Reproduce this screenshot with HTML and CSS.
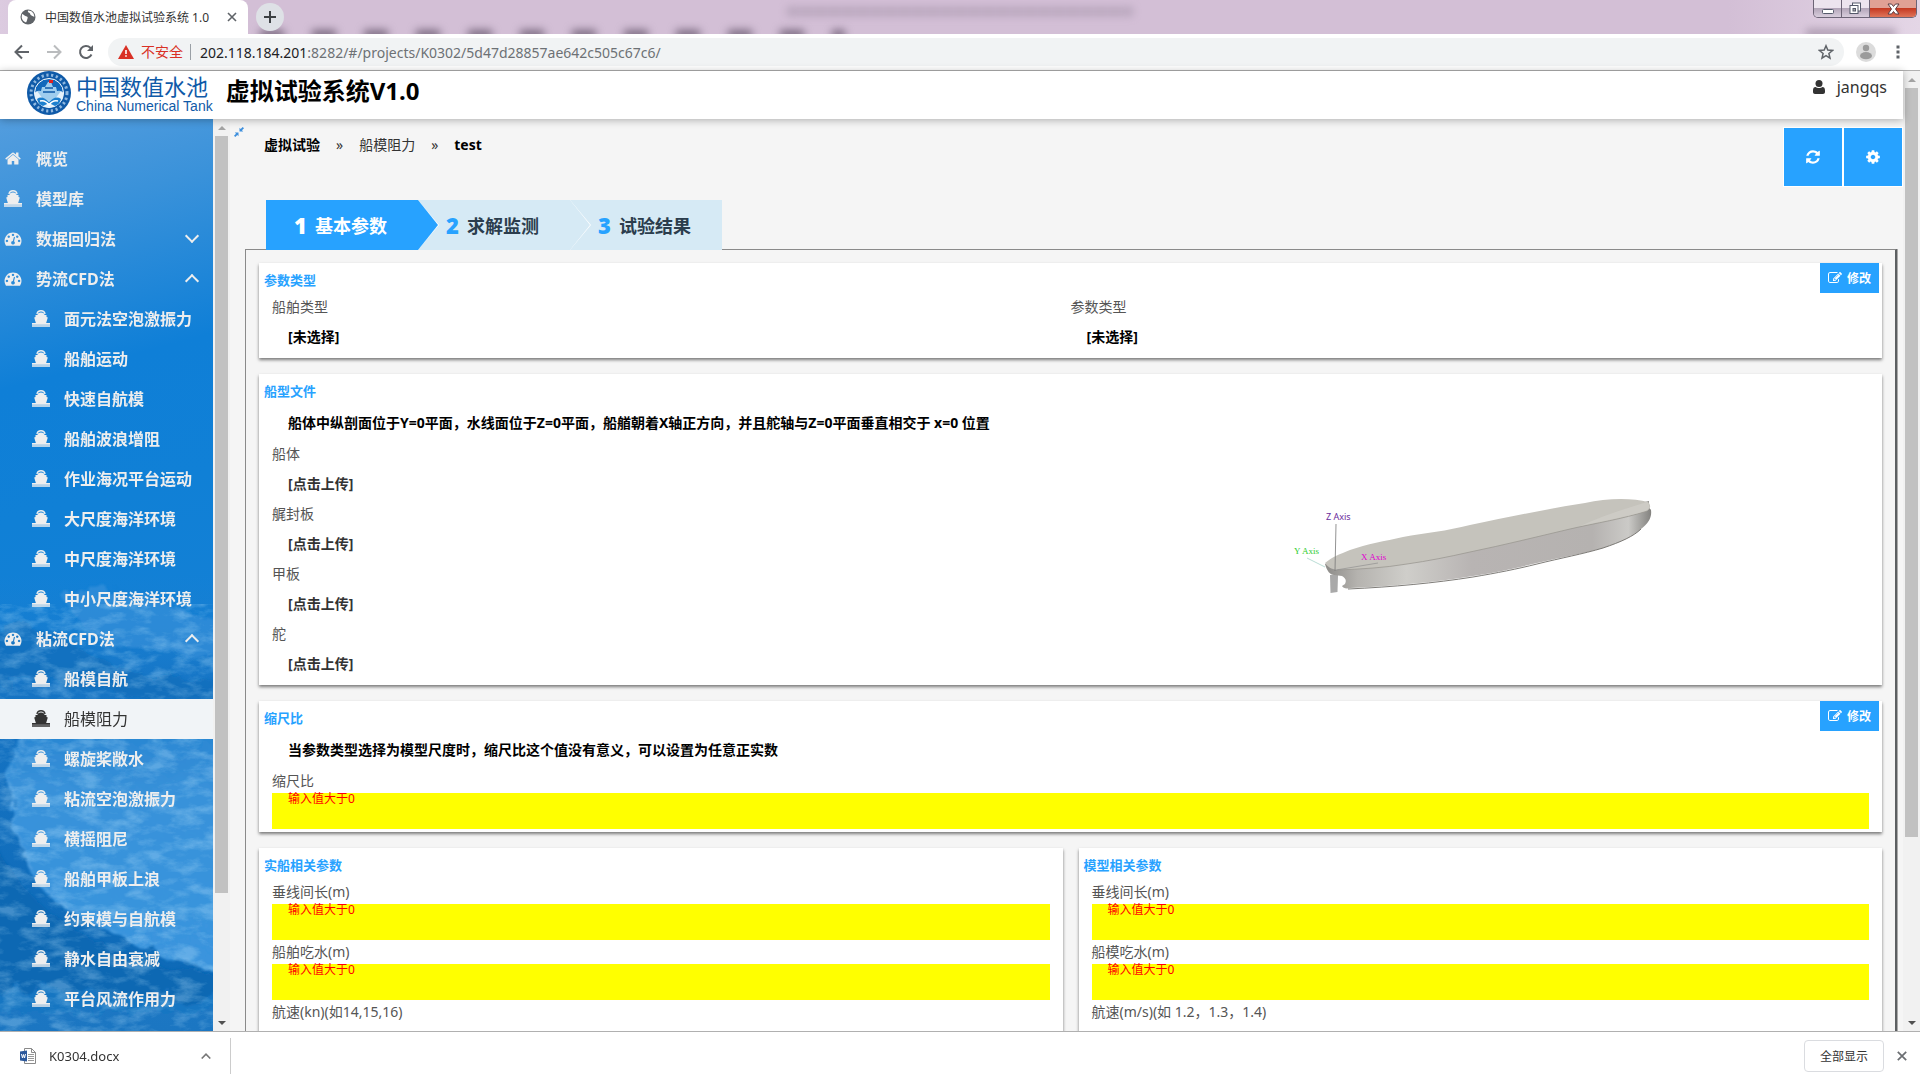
FILE: index.html
```html
<!DOCTYPE html>
<html lang="zh-CN">
<head>
    <meta charset="UTF-8">
    <meta name="viewport" content="width=device-width, initial-scale=1.0">
    <title>中国数值水池虚拟试验系统 1.0</title>
    <link rel="stylesheet" href="styles.css">
</head>
<body>
    <svg class="sprite" aria-hidden="true">
        <symbol id="i-home" viewBox="0 0 1792 1792"><path d="M1472 992v480q0 26-19 45t-45 19h-384v-384h-256v384h-384q-26 0-45-19t-19-45v-480q0-1 .5-3t.5-3l575-474 575 474q1 2 1 6zm223-69l-62 74q-8 9-21 11h-3q-13 0-21-7l-692-577-692 577q-12 8-24 7-13-2-21-11l-62-74q-8-10-7-23.5t11-21.5l719-599q32-26 76-26t76 26l244 204v-195q0-14 9-23t23-9h192q14 0 23 9t9 23v408l219 182q10 8 11 21.5t-7 23.5z"/></symbol>
        <symbol id="i-gauge" viewBox="0 0 1792 1792"><path d="M384 1152q0-53-37.5-90.5t-90.5-37.5-90.5 37.5-37.5 90.5 37.5 90.5 90.5 37.5 90.5-37.5 37.5-90.5zm192-448q0-53-37.5-90.5t-90.5-37.5-90.5 37.5-37.5 90.5 37.5 90.5 90.5 37.5 90.5-37.5 37.5-90.5zm428 481l101-382q6-26-7.5-48.5t-38.5-29.5-48 6.5-30 39.5l-101 382q-60 5-107 43.5t-63 98.5q-20 77 20 146t117 89 146-20 89-117q16-60-6-117t-72-91zm660-33q0-53-37.5-90.5t-90.5-37.5-90.5 37.5-37.5 90.5 37.5 90.5 90.5 37.5 90.5-37.5 37.5-90.5zm-640-640q0-53-37.5-90.5t-90.5-37.5-90.5 37.5-37.5 90.5 37.5 90.5 90.5 37.5 90.5-37.5 37.5-90.5zm448 192q0-53-37.5-90.5t-90.5-37.5-90.5 37.5-37.5 90.5 37.5 90.5 90.5 37.5 90.5-37.5 37.5-90.5zm320 448q0 261-141 483-19 29-54 29h-1402q-35 0-54-29-141-221-141-483 0-182 71-348t191-286 286-191 348-71 348 71 286 191 191 286 71 348z"/></symbol>
        <symbol id="i-ship" viewBox="0 0 18 17"><path d="M5 4C5.300 1.700 6.800 .7 9 .7s3.700 1 4 3.300" fill="none" stroke="currentColor" stroke-width="1.400"/><path d="M5.500 5c0-1.500 1-2.600 3.500-2.600s3.500 1.100 3.500 2.600h2v2l1.300.6-1.800 5.900H4L2.200 7.600 3.500 7V5z"/><path d="M0 13h18v4H0z" opacity=".75"/><path d="M0 13h18v1.200H0z"/></symbol>
        <symbol id="i-cog" viewBox="0 0 1792 1792"><path d="M1152 896q0-106-75-181t-181-75-181 75-75 181 75 181 181 75 181-75 75-181zm512-109v222q0 12-8 23t-20 13l-185 28q-19 54-39 91 35 50 107 138 10 12 10 25t-9 23q-27 37-99 108t-94 71q-12 0-26-9l-138-108q-44 23-91 38-16 136-29 186-7 28-36 28h-222q-14 0-24.5-8.5t-11.5-21.5l-28-184q-49-16-90-37l-141 107q-10 9-25 9-14 0-25-11-126-114-165-168-7-10-7-23 0-12 8-23 15-21 51-66.5t54-70.5q-27-50-41-99l-183-27q-13-2-21-12.5t-8-23.5v-222q0-12 8-23t19-13l186-28q14-46 39-92-40-57-107-138-10-12-10-24 0-10 9-23 26-36 98.5-107.5t94.500-71.5q13 0 26 10l138 107q44-23 91-38 16-136 29-186 7-28 36-28h222q14 0 24.5 8.5t11.5 21.5l28 184q49 16 90 37l142-107q9-9 24-9 13 0 25 10 129 119 165 170 7 8 7 22 0 12-8 23-15 21-51 66.5t-54 70.5q26 50 41 98l183 28q13 2 21 12.5t8 23.5z"/></symbol>
        <symbol id="i-refresh" viewBox="0 0 1792 1792"><path d="M1639 1056q0 5-1 7-64 268-268 434.5t-478 166.5q-146 0-282.5-55t-243.5-157l-129 129q-19 19-45 19t-45-19-19-45v-448q0-26 19-45t45-19h448q26 0 45 19t19 45-19 45l-137 137q71 66 161 102t187 36q134 0 250-65t186-179q11-17 53-117 8-23 30-23h192q13 0 22.5 9.5t9.5 22.5zm25-800v448q0 26-19 45t-45 19h-448q-26 0-45-19t-19-45 19-45l138-138q-148-137-349-137-134 0-250 65t-186 179q-11 17-53 117-8 23-30 23h-199q-13 0-22.5-9.5t-9.5-22.5v-7q65-268 270-434.5t480-166.5q146 0 284 55.5t245 156.5l130-129q19-19 45-19t45 19 19 45z"/></symbol>
        <symbol id="i-edit" viewBox="0 0 1792 1792"><path d="M888 1184l116-116-152-152-116 116v56h96v96h56zm440-720q-16-16-33 1l-350 350q-17 17-1 33t33-1l350-350q17-17 1-33zm80 594v190q0 119-84.5 203.5t-203.5 84.5h-832q-119 0-203.5-84.5t-84.5-203.5v-832q0-119 84.5-203.5t203.5-84.5h832q63 0 117 25 15 7 18 23 3 17-9 29l-49 49q-14 14-32 8-23-6-45-6h-832q-66 0-113 47t-47 113v832q0 66 47 113t113 47h832q66 0 113-47t47-113v-126q0-13 9-22l64-64q15-15 35-7t20 29zm-96-738l288 288-672 672h-288v-288zm444 132l-92 92-288-288 92-92q28-28 68-28t68 28l152 152q28 28 28 68t-28 68z"/></symbol>
    </svg>

    <div class="tab-strip">
        <div class="glass" aria-hidden="true">
            <i class="ghost ghost-title"></i>
            <i class="ghost ghost-menu"></i>
            <i class="ghost ghost-share"></i>
        </div>
        <div class="tab">
            <svg width="16" height="16" viewBox="0 0 16 16"><circle cx="8" cy="8" r="7.500" fill="#5f6368"/><path d="M2 5c2 .5 2.500 2 4 2.200s2 1 1.500 2.300S7 12 6 13.500C4 13 2 11 1.700 8.500zM8 1.500c-.5 1.500.5 2 1.500 2.500s.5 2 2 2.500 2 1.500 2.800 1.200C14.300 4.500 12 1.500 8 1.500z" fill="#fff"/></svg>
            <span class="tab-title">中国数值水池虚拟试验系统 1.0</span>
            <button class="plain" aria-label="关闭标签页"><svg width="10" height="10" viewBox="0 0 10 10"><path d="M1 1l8 8M9 1l-8 8" stroke="#5f6368" stroke-width="1.600"/></svg></button>
        </div>
        <button class="new-tab" aria-label="新标签页"><svg width="12" height="12" viewBox="0 0 12 12"><path d="M6 0v12M0 6h12" stroke="#3c4043" stroke-width="2"/></svg></button>
        <div class="window-buttons">
            <button class="win" aria-label="最小化"><svg width="14" height="14" viewBox="0 0 14 14"><rect x="1.500" y="7.500" width="11" height="4" rx="1" fill="#fff" stroke="#555a6b"/></svg></button>
            <button class="win" aria-label="还原"><svg width="13" height="13" viewBox="0 0 13 13"><rect x="3.500" y="1" width="8" height="8" fill="#fff" stroke="#555a6b"/><rect x="1" y="3.500" width="8" height="8" fill="#fff" stroke="#555a6b"/><rect x="4" y="6.500" width="2.500" height="2.500" fill="#aaa" stroke="#555a6b"/></svg></button>
            <button class="win win-close" aria-label="关闭"><svg width="13" height="12" viewBox="0 0 13 12"><path d="M1 1h3.500l2 2.500 2-2.500H12L8.500 6l3.500 5H8.500l-2-2.500-2 2.500H1l3.500-5z" fill="#fff" stroke="#5b3f44"/></svg></button>
        </div>
    </div>

    <div class="toolbar">
        <div class="nav-buttons">
            <button class="plain" aria-label="后退"><svg width="16" height="16" viewBox="0 0 16 16"><path d="M15 8H2M8 1.500L1.500 8 8 14.500" fill="none" stroke="#5f6368" stroke-width="2"/></svg></button>
            <button class="plain" aria-label="前进"><svg width="16" height="16" viewBox="0 0 16 16"><path d="M1 8h13M8 1.500L14.500 8 8 14.500" fill="none" stroke="#babcbe" stroke-width="2"/></svg></button>
            <button class="plain" aria-label="刷新"><svg width="16" height="16" viewBox="0 0 16 16"><path d="M13.500 10.500A6 6 0 1 1 12.300 3.700L14 5.400" fill="none" stroke="#5f6368" stroke-width="2"/><path d="M15 1v6H9z" fill="#5f6368"/></svg></button>
        </div>
        <div class="omnibox">
            <svg width="16" height="14" viewBox="0 0 16 14"><path d="M8 0l8 14H0z" fill="#d93025"/><path d="M7.200 5h1.600v4H7.200zM7.200 10.200h1.600v1.600H7.200z" fill="#fff"/></svg>
            <span class="insecure">不安全</span>
            <span class="url">202.118.184.201<span>:8282/#/projects/K0302/5d47d28857ae642c505c67c6/</span></span>
            <button class="plain star" aria-label="收藏"><svg width="16" height="16" viewBox="0 0 16 16"><path d="M8 1.800l1.800 4.300 4.700.4-3.600 3 1.100 4.600L8 11.700l-4 2.400 1.100-4.600-3.600-3 4.700-.4z" fill="none" stroke="#5f6368" stroke-width="1.500"/></svg></button>
        </div>
        <button class="plain" aria-label="用户"><svg width="20" height="20" viewBox="0 0 20 20"><circle cx="10" cy="10" r="10" fill="#dcdcdc"/><circle cx="10" cy="6" r="3.200" fill="#9b9b9b"/><ellipse cx="10" cy="13.700" rx="6" ry="3.600" fill="#9b9b9b"/></svg></button>
        <button class="plain" aria-label="菜单"><svg width="4" height="14" viewBox="0 0 4 14"><path d="M.5 .5h3v3h-3zM.5 5.500h3v3h-3zM.5 10.500h3v3h-3z" fill="#5f6368"/></svg></button>
    </div>

    <div class="page">
        <div class="app">
            <header class="header">
                <a class="logo" href="#">
                    <svg width="44" height="44" viewBox="0 0 44 44">
                        <circle cx="22" cy="22" r="22" fill="#0f5aa8"/>
                        <circle cx="22" cy="22" r="18" fill="none" stroke="#8fb8e0" stroke-width="3" stroke-dasharray="2.200 2.600"/>
                        <circle cx="22" cy="22" r="14.500" fill="#1268bb" stroke="#fff"/>
                        <path d="M7.500 22c3-3 6-3 9 0l5.500 5 5.500-5c3-3 6-3 9 0a14.500 14.500 0 0 1-29 0z" fill="#e6f2fb"/>
                        <path d="M21 11h3l2 5h3l1 4h4l-6 8-6 2-6-2-6-8h4l1-4h3z" fill="#9fcdee"/>
                        <path d="M16 21h12M18 17h8" stroke="#0f5aa8" stroke-width="1.500"/>
                        <path d="M22 9h4v3h-4z" fill="#e02020"/>
                        <path d="M10 28c4-3 8-1 12 3 4-4 8-6 12-3-1 4-3 6-6 7l-6-3-6 3c-3-1-5-3-6-7z" fill="#1c7fce"/>
                        <path d="M13 30c4-1 7 1 9 4 2-3 5-5 9-4" fill="none" stroke="#fff" stroke-width="1.500"/>
                    </svg>
                    <span class="logo-text">
                        <span class="logo-cn">中国数值水池</span>
                        <span class="logo-en">China Numerical Tank</span>
                    </span>
                </a>
                <h1>虚拟试验系统V1.0</h1>
                <div class="user">
                    <svg width="12" height="14" viewBox="0 0 12 14"><circle cx="6" cy="3.500" r="3.500"/><path d="M0 10.500C0 8 1 7 2.600 7c1 .7 2 1 3.400 1s2.400-.3 3.400-1C11 7 12 8 12 10.500V12c0 1.200-.8 2-2 2H2c-1.200 0-2-.8-2-2z"/></svg>
                    <span>jangqs</span>
                </div>
            </header>

            <div class="body">
                <nav class="sidebar">
                    <svg class="wave" viewBox="0 0 213 460" preserveAspectRatio="none" aria-hidden="true">
                        <defs>
                            <filter id="foam" x="0" y="0" width="1" height="1"><feTurbulence type="fractalNoise" baseFrequency=".04 .09" numOctaves="5" seed="8"/><feColorMatrix values="0 0 0 0 .5  0 0 0 0 .78  0 0 0 0 .98  0 3 0 0 -1.300"/></filter>
                            <filter id="rough" x="-.1" y="-.1" width="1.200" height="1.200"><feTurbulence type="fractalNoise" baseFrequency=".05" numOctaves="4" seed="3"/><feDisplacementMap in="SourceGraphic" scale="28"/><feGaussianBlur stdDeviation="1"/></filter>
                            <linearGradient id="fade" x1="0" y1="0" x2="0" y2="1"><stop offset="0" stop-color="#1c80d2" stop-opacity="0"/><stop offset=".25" stop-color="#1674c4"/><stop offset="1" stop-color="#0c68b5"/></linearGradient>
                            <linearGradient id="crest" x1="0" y1="0" x2="0" y2="1"><stop offset="0" stop-color="#2583d0"/><stop offset=".3" stop-color="#3992da"/><stop offset="1" stop-color="#3a95de"/></linearGradient>
                        </defs>
                        <rect width="213" height="460" fill="url(#fade)"/>
                        <g filter="url(#rough)">
                            <path d="M22 160C70 130 150 150 240 140V406C150 385 80 350 45 320 10 280-2 210 22 160z" fill="url(#crest)"/>
                            <path d="M60 20c50-10 90 0 180 40v30c-60-10-110-20-150-30z" fill="#3a93da" opacity=".6"/>
                            <path d="M-10 60c40-20 70 0 100 20s60 20 130 30v20c-60 0-100-10-140-20S10 110-10 110z" fill="#0f6dbb" opacity=".7"/>
                            <path d="M-20 240c30 70 70 110 120 130s80 30 140 35v35H-20z" fill="#0b67b3"/>
                            <path d="M-20 425c70-20 150 10 260 0v60H-20z" fill="#2380cb" opacity=".6"/>
                            <path d="M24 165C8 200 6 250 24 285s40 50 90 75 80 32 103 38" fill="none" stroke="#7cbcec" stroke-width="2" opacity=".4" stroke-dasharray="7 3 2 4"/>
                        </g>
                        <rect y="30" width="213" height="430" filter="url(#foam)" opacity=".3"/>
                    </svg>
                    <ul class="menu">
                        <li><a href="#"><svg><use href="#i-home"/></svg>概览</a></li>
                        <li><a href="#"><svg><use href="#i-ship"/></svg>模型库</a></li>
                        <li><a href="#" class="group"><svg><use href="#i-gauge"/></svg>数据回归法</a></li>
                        <li>
                            <a href="#" class="group open"><svg><use href="#i-gauge"/></svg>势流CFD法</a>
                            <ul class="submenu">
                                <li><a href="#"><svg><use href="#i-ship"/></svg>面元法空泡激振力</a></li>
                                <li><a href="#"><svg><use href="#i-ship"/></svg>船舶运动</a></li>
                                <li><a href="#"><svg><use href="#i-ship"/></svg>快速自航模</a></li>
                                <li><a href="#"><svg><use href="#i-ship"/></svg>船舶波浪增阻</a></li>
                                <li><a href="#"><svg><use href="#i-ship"/></svg>作业海况平台运动</a></li>
                                <li><a href="#"><svg><use href="#i-ship"/></svg>大尺度海洋环境</a></li>
                                <li><a href="#"><svg><use href="#i-ship"/></svg>中尺度海洋环境</a></li>
                                <li><a href="#"><svg><use href="#i-ship"/></svg>中小尺度海洋环境</a></li>
                            </ul>
                        </li>
                        <li>
                            <a href="#" class="group open"><svg><use href="#i-gauge"/></svg>粘流CFD法</a>
                            <ul class="submenu">
                                <li><a href="#"><svg><use href="#i-ship"/></svg>船模自航</a></li>
                                <li><a href="#" class="active"><svg><use href="#i-ship"/></svg>船模阻力</a></li>
                                <li><a href="#"><svg><use href="#i-ship"/></svg>螺旋桨敞水</a></li>
                                <li><a href="#"><svg><use href="#i-ship"/></svg>粘流空泡激振力</a></li>
                                <li><a href="#"><svg><use href="#i-ship"/></svg>横摇阻尼</a></li>
                                <li><a href="#"><svg><use href="#i-ship"/></svg>船舶甲板上浪</a></li>
                                <li><a href="#"><svg><use href="#i-ship"/></svg>约束模与自航模</a></li>
                                <li><a href="#"><svg><use href="#i-ship"/></svg>静水自由衰减</a></li>
                                <li><a href="#"><svg><use href="#i-ship"/></svg>平台风流作用力</a></li>
                            </ul>
                        </li>
                    </ul>
                </nav>
                <div class="scrollbar" aria-hidden="true"><i class="arrow up"></i><i class="thumb thumb-menu"></i><i class="arrow down"></i></div>

                <main class="main">
                    <div class="topline">
                        <button class="plain collapse" aria-label="收起菜单"><svg width="10" height="10" viewBox="0 0 10 10"><path d="M5.500 4.500V.8l1.200 1.200L8.700 0 10 1.300 8 3.300l1.200 1.200zM4.500 5.500v3.700L3.300 8l-2 2L0 8.700l2-2L.8 5.500z" fill="#3d8fdd"/></svg></button>
                        <div class="breadcrumb">
                            <a href="#" class="strong">虚拟试验</a>
                            <span>»</span>
                            <a href="#">船模阻力</a>
                            <span>»</span>
                            <b class="strong">test</b>
                        </div>
                        <div class="tools">
                            <button aria-label="刷新数据"><svg width="16" height="16"><use href="#i-refresh"/></svg></button>
                            <button aria-label="设置"><svg width="16" height="16"><use href="#i-cog"/></svg></button>
                        </div>
                    </div>

                    <div class="steps">
                        <button class="step current"><b>1</b>基本参数</button>
                        <button class="step"><b>2</b>求解监测</button>
                        <button class="step"><b>3</b>试验结果</button>
                    </div>

                    <div class="panel">
                        <section class="card">
                            <div class="card-head">
                                <h2>参数类型</h2>
                                <button class="edit"><svg width="14" height="14"><use href="#i-edit"/></svg>修改</button>
                            </div>
                            <div class="card-body two">
                                <div class="field"><label for="shipType">船舶类型</label><button class="value" id="shipType">[未选择]</button></div>
                                <div class="field"><label for="paramType">参数类型</label><button class="value" id="paramType">[未选择]</button></div>
                            </div>
                        </section>

                        <section class="card">
                            <div class="card-head"><h2>船型文件</h2></div>
                            <div class="card-body two">
                                <div>
                                    <p class="hint">船体中纵剖面位于Y=0平面，水线面位于Z=0平面，船艏朝着X轴正方向，并且舵轴与Z=0平面垂直相交于 x=0 位置</p>
                                    <div class="field"><label for="hull">船体</label><button class="value upload" id="hull">[点击上传]</button></div>
                                    <div class="field"><label for="transom">艉封板</label><button class="value upload" id="transom">[点击上传]</button></div>
                                    <div class="field"><label for="deck">甲板</label><button class="value upload" id="deck">[点击上传]</button></div>
                                    <div class="field"><label for="rudder">舵</label><button class="value upload" id="rudder">[点击上传]</button></div>
                                </div>
                                <div class="preview">
                                    <svg width="400" height="130" viewBox="0 0 400 130">
                                        <defs>
                                            <linearGradient id="side" x1="0" y1="0" x2="1" y2="0"><stop offset="0" stop-color="#8c8b88"/><stop offset=".1" stop-color="#b5b3af"/><stop offset=".25" stop-color="#cfceca"/><stop offset=".45" stop-color="#b8b4b3"/><stop offset=".82" stop-color="#b5b2b0"/><stop offset=".93" stop-color="#cbcac7"/><stop offset="1" stop-color="#83827f"/></linearGradient>
                                        </defs>
                                        <path d="M37 79L55 88" stroke="#9ccfc4" stroke-width=".7"/>
                                        <path d="M60 96h8l-.5 17-7 1z" fill="#a9a9a9"/>
                                        <path d="M55 85c2 7 5 11 9 11l8 1c3 2 5 4 3 8l-3 2c1 2 4 3 8 2 45-2 85-6 123-12 24-4 44-8 64-13 24-6 46-9 66-15 18-6 31-12 38-19 8-6 11-12 10-19-2-3-3-2-2-8V22L300 40 137 78z" fill="url(#side)"/>
                                        <path d="M78 110c45-2 87-6 125-12 24-4 44-8 64-13 24-6 46-10 66-16 18-6 31-12 38-19" fill="none" stroke="#6f6d69" stroke-width=".9"/>
                                        <path d="M55 84C62 78 70 75 80 71c17-6 35-9 53-13 22-4 44-6 67-12 40-8 76-16 115-22 22-5 48-5 63-1 3 3 3 6-1 9-24 8-51 12-77 18-34 8-66 16-100 23-22 5-42 9-63 12-24 4-46 5-70 6-6-1-9-3-12-7z" fill="#c5c3bc"/>
                                        <path d="M67 91c24-1 46-2 70-6 21-3 41-7 63-12 34-7 66-15 100-23 26-6 53-10 77-18" fill="none" stroke="#9a9892" stroke-width=".8"/>
                                        <path d="M310 47c22-10 44-17 67-24 3 3 3 6-1 9-20 6-44 10-66 15z" fill="#d5d4ce" opacity=".5"/>
                                        <path d="M66 45L65 92" stroke="#777" stroke-width=".8"/>
                                        <path d="M66 91l42-7" stroke="#888" stroke-width=".6"/>
                                        <text x="56" y="41" class="axis-z">Z Axis</text>
                                        <text x="24" y="75" class="axis-y">Y Axis</text>
                                        <text x="91" y="81" class="axis-x">X Axis</text>
                                    </svg>
                                </div>
                            </div>
                        </section>

                        <section class="card">
                            <div class="card-head">
                                <h2>缩尺比</h2>
                                <button class="edit"><svg width="14" height="14"><use href="#i-edit"/></svg>修改</button>
                            </div>
                            <div class="card-body">
                                <p class="hint">当参数类型选择为模型尺度时，缩尺比这个值没有意义，可以设置为任意正实数</p>
                                <div class="field"><label for="scale">缩尺比</label><div class="invalid"><span>输入值大于0</span><input type="text" id="scale"></div></div>
                            </div>
                        </section>

                        <div class="columns">
                            <section class="card">
                                <div class="card-head"><h2>实船相关参数</h2></div>
                                <div class="card-body">
                                    <div class="field"><label for="shipLpp">垂线间长(m)</label><div class="invalid"><span>输入值大于0</span><input type="text" id="shipLpp"></div></div>
                                    <div class="field"><label for="shipDraft">船舶吃水(m)</label><div class="invalid"><span>输入值大于0</span><input type="text" id="shipDraft"></div></div>
                                    <div class="field"><label for="shipSpeed">航速(kn)(如14,15,16)</label><input type="text" class="blank" id="shipSpeed"></div>
                                </div>
                            </section>
                            <section class="card">
                                <div class="card-head"><h2>模型相关参数</h2></div>
                                <div class="card-body">
                                    <div class="field"><label for="modelLpp">垂线间长(m)</label><div class="invalid"><span>输入值大于0</span><input type="text" id="modelLpp"></div></div>
                                    <div class="field"><label for="modelDraft">船模吃水(m)</label><div class="invalid"><span>输入值大于0</span><input type="text" id="modelDraft"></div></div>
                                    <div class="field"><label for="modelSpeed">航速(m/s)(如 1.2，1.3，1.4)</label><input type="text" class="blank" id="modelSpeed"></div>
                                </div>
                            </section>
                        </div>
                    </div>
                </main>
            </div>
        </div>
        <div class="scrollbar" aria-hidden="true"><i class="arrow up"></i><i class="thumb thumb-page"></i><i class="arrow down"></i></div>
    </div>

    <div class="downloads">
        <a class="file" href="#">
            <svg width="16" height="16" viewBox="0 0 16 16"><path d="M4.500 .5h7l4 4v11h-11z" fill="#fff" stroke="#8a8a8a"/><path d="M11.500 .5v4h4" fill="none" stroke="#8a8a8a"/><path d="M8 6.500h6M8 8.500h6M8 10.500h6M8 12.500h6" stroke="#999"/><path d="M0 3.500l7-1v11l-7-1z" fill="#2b579a"/><path d="M1.500 6l1 4L3.500 6.500l1 3.500 1-4" fill="none" stroke="#fff"/></svg>
            <span>K0304.docx</span>
        </a>
        <button class="plain more" aria-label="更多"><svg width="10" height="6" viewBox="0 0 10 6"><path d="M.7 5.500L5 1.200l4.300 4.300" fill="none" stroke="#777" stroke-width="1.600"/></svg></button>
        <button class="show-all">全部显示</button>
        <button class="plain close-bar" aria-label="关闭下载栏"><svg width="10" height="10" viewBox="0 0 10 10"><path d="M.8 .8l8.400 8.400M9.200 .8L.8 9.200" stroke="#6b6e72" stroke-width="1.700"/></svg></button>
    </div>
</body>
</html>
```
FILE: styles.css
```css
* {
    margin: 0;
    padding: 0;
    box-sizing: border-box;
}

body {
    display: flex;
    flex-direction: column;
    height: 100vh;
    overflow: hidden;
    font-family: "Noto Sans", "Noto Sans CJK SC", sans-serif;
    font-size: 14px;
    color: #333;
    background: #fff;
}

button, input {
    font: inherit;
    color: inherit;
    border: none;
    background: none;
}

button {
    cursor: pointer;
}

a {
    color: inherit;
    text-decoration: none;
}

ul {
    list-style: none;
}

svg {
    display: block;
    fill: currentColor;
    flex-shrink: 0;
}

.sprite {
    position: absolute;
    width: 0;
    height: 0;
}

.plain {
    display: flex;
    align-items: center;
    justify-content: center;
}

/* browser frame */
.tab-strip {
    position: relative;
    display: flex;
    flex-shrink: 0;
    height: 34px;
    padding-left: 8px;
    background: linear-gradient(90deg, #dccbe0, #d3bfd6 4%, #d3bfd6 90%, #e4d6e6);
}

.glass {
    position: absolute;
    inset: 0;
    overflow: hidden;
}

.ghost {
    position: absolute;
    filter: blur(4px);
}

.ghost-title {
    left: 41%;
    top: 7px;
    width: 18%;
    height: 9px;
    background: repeating-linear-gradient(90deg, #a998ae 0 11px, #bba9bf 11px 14px);
    opacity: 0.7;
}

.ghost-menu {
    left: 260px;
    right: 56%;
    bottom: -5px;
    height: 9px;
    background: repeating-linear-gradient(90deg, #77677d 0 24px, transparent 24px 52px);
}

.ghost-share {
    right: 24px;
    bottom: -4px;
    width: 90px;
    height: 9px;
    background: #8d7c91;
    opacity: 0.6;
}

.tab {
    position: relative;
    display: flex;
    align-items: center;
    width: 240px;
    padding: 0 11px 0 12px;
    background: #fff;
    border-radius: 8px 8px 0 0;
}

.tab-title {
    flex: 1;
    padding-left: 9px;
    font-size: 12px;
    white-space: nowrap;
}

.new-tab {
    position: relative;
    display: flex;
    align-items: center;
    justify-content: center;
    width: 28px;
    height: 28px;
    margin: 3px 0 0 8px;
    border-radius: 50%;
    background: #dee1e6;
}

.window-buttons {
    position: relative;
    display: flex;
    height: 18px;
    margin: 0 3px 0 auto;
    border: 1px solid #6c6476;
    border-top: none;
    border-radius: 0 0 5px 5px;
    overflow: hidden;
}

.win {
    display: flex;
    align-items: center;
    justify-content: center;
    width: 28px;
    border-right: 1px solid #6c6476;
    background: linear-gradient(#ece4ee 50%, #b3a6b9 50%, #d9cedd);
}

.win-close {
    width: 46px;
    border-right: none;
    background: linear-gradient(#e0a094 50%, #c53a22 50%, #e0755a);
}

.toolbar {
    display: flex;
    align-items: center;
    flex-shrink: 0;
    gap: 12px;
    height: 37px;
    padding: 0 12px 0 14px;
    border-bottom: 1px solid #b0b0b0;
}

.toolbar > .plain {
    min-width: 20px;
}

.nav-buttons {
    display: flex;
    gap: 16px;
    margin-right: 2px;
}

.omnibox {
    display: flex;
    align-items: center;
    flex: 1;
    height: 28px;
    padding: 0 10px;
    border-radius: 14px;
    background: #f1f3f4;
}

.insecure {
    margin: 0 9px 0 7px;
    padding-right: 7px;
    line-height: 16px;
    color: #d93025;
    border-right: 1px solid #9aa0a6;
}

.url {
    color: #202124;
}

.url span {
    color: #6d7175;
}

.star {
    margin-left: auto;
}

.page {
    display: flex;
    flex: 1;
    min-height: 0;
}

.app {
    display: flex;
    flex-direction: column;
    flex: 1;
    min-width: 0;
}

.scrollbar {
    display: flex;
    flex-direction: column;
    flex-shrink: 0;
    align-items: center;
    width: 17px;
    background: #f1f1f1;
}

.arrow {
    margin: 7px 0 6px;
    border: 4px solid transparent;
}

.arrow.up {
    margin-top: 3px;
    border-bottom-color: #a3a3a3;
}

.arrow.down {
    margin: auto 0 2px;
    border-top-color: #505050;
}

.thumb {
    width: 13px;
    background: #c1c1c1;
}

.thumb-menu {
    height: 83%;
}

.thumb-page {
    height: 78%;
}

/* header */
.header {
    position: relative;
    z-index: 2;
    display: flex;
    flex-shrink: 0;
    height: 48px;
    padding: 0 16px 0 27px;
    background: #fff;
    box-shadow: 0 1px 8px rgba(0, 0, 0, 0.3);
}

.logo {
    display: flex;
    gap: 5px;
    color: #0f5aa8;
}

.logo-text {
    display: flex;
    flex-direction: column;
    padding-top: 4px;
}

.logo-cn {
    font-size: 22px;
    line-height: 22px;
}

.logo-en {
    font-family: "Liberation Sans", Arial, sans-serif;
    font-size: 14px;
    line-height: 18px;
}

h1 {
    margin-left: 13px;
    font-size: 24px;
    line-height: 40px;
    color: #000;
}

.user {
    display: flex;
    align-items: center;
    gap: 12px;
    height: 32px;
    margin-left: auto;
    font-size: 16px;
}

.body {
    display: flex;
    flex: 1;
    min-height: 0;
}

/* sidebar */
.sidebar {
    position: relative;
    width: 213px;
    flex-shrink: 0;
    padding-top: 20px;
    overflow: hidden;
    color: #eee;
    background: linear-gradient(165deg, #539dde 0, #3a92da 11%, #0f7fd7 28%, #1080d6 42%, #1c80d2 100%);
}

.wave {
    position: absolute;
    left: 0;
    bottom: 0;
    width: 100%;
    height: 50%;
}

.menu {
    position: relative;
    font-size: 16px;
    font-weight: bold;
}

.menu a {
    display: flex;
    align-items: center;
    gap: 14px;
    height: 40px;
    padding: 0 14px 2px 4px;
    white-space: nowrap;
}

.menu svg {
    width: 18px;
    height: 17px;
}

.submenu a {
    padding-left: 32px;
}

.menu .active {
    color: #333;
    font-weight: normal;
    background: #f1f4f7;
}

.group::after {
    content: "";
    width: 8px;
    height: 8px;
    margin: -4px 2px 0 auto;
    border: solid #eee;
    border-width: 0 2px 2px 0;
    transform: rotate(45deg);
}

.group.open::after {
    margin-top: 6px;
    transform: rotate(225deg);
}

/* content */
.main {
    flex: 1;
    min-width: 0;
    overflow: hidden;
    padding-top: 8px;
    background: #f5f5f5;
}

.topline {
    display: flex;
    align-items: flex-start;
    padding-left: 4px;
}

.breadcrumb {
    display: flex;
    gap: 16px;
    padding: 6px 0 0 20px;
    line-height: 24px;
}

.strong {
    font-weight: bold;
    color: #000;
}

.tools {
    display: flex;
    margin-left: auto;
}

.tools button {
    display: flex;
    align-items: center;
    justify-content: center;
    width: 60px;
    height: 60px;
    border: 1px solid #fff;
    color: #fff;
    background: #27a2ff;
}

.steps {
    position: relative;
    display: flex;
    width: 456px;
    margin: 13px 0 -1px 36px;
    background: #d6eaf5;
}

.step {
    position: relative;
    display: flex;
    align-items: center;
    flex: 1;
    gap: 8px;
    height: 50px;
    padding-left: 28px;
    font-size: 18px;
    font-weight: bold;
    color: #2b3d4d;
    white-space: nowrap;
}

.step b {
    font-size: 22px;
    color: #27a2ff;
}

/* arrow heads between the steps: white edge first, fill on top */
.step:not(:last-child)::before,
.step:not(:last-child)::after {
    content: "";
    position: absolute;
    z-index: 1;
    left: 100%;
    top: 0;
    width: 20px;
    height: 100%;
    background: #d6eaf5;
    clip-path: polygon(0 0, 100% 50%, 0 100%);
}

.step:not(:last-child)::before {
    width: 21px;
    background: #fff;
}

.step.current,
.step.current b {
    color: #fff;
}

.step.current,
.step.current:not(:last-child)::after {
    background: #27a2ff;
}

.panel {
    display: flex;
    flex-direction: column;
    gap: 16px;
    margin: 0 6px 0 15px;
    padding: 13px;
    border: 1px solid #8a8a8a;
    border-right: 2px solid #5c5f61;
    box-shadow: 1px 0 #aaa;
}

.card {
    padding-bottom: 3px;
    background: #fff;
    box-shadow: 0 2px 3px rgba(0, 0, 0, 0.5);
}

.card-head {
    display: flex;
    align-items: flex-start;
    justify-content: space-between;
    height: 32px;
    padding: 0 3px 0 5px;
}

h2 {
    padding-top: 3px;
    font-size: 13px;
    line-height: 28px;
    color: #27a2ff;
}

.edit {
    display: flex;
    align-items: center;
    gap: 5px;
    height: 30px;
    padding: 0 8px;
    font-size: 12px;
    font-weight: bold;
    color: #fff;
    background: #27a2ff;
}

.card-body {
    margin: 0 13px;
}

.two {
    display: grid;
    grid-template-columns: 1fr 1fr;
}

.columns {
    display: grid;
    grid-template-columns: 1fr 1fr;
    gap: 16px;
}

.hint {
    height: 36px;
    padding-left: 16px;
    line-height: 34px;
    font-weight: bold;
    color: #000;
    white-space: nowrap;
}

.field {
    display: flex;
    flex-direction: column;
    align-items: flex-start;
}

.field label {
    line-height: 24px;
    color: #555;
}

.value {
    height: 36px;
    padding: 0 0 2px 16px;
    font-weight: bold;
    color: #000;
}

.value.upload {
    color: #333;
}

.invalid {
    display: flex;
    flex-direction: column;
    width: 100%;
    height: 36px;
    padding-left: 16px;
    background: #ff0;
}

.invalid span {
    font-size: 12px;
    line-height: 12px;
    color: #f00;
}

.invalid input,
.blank {
    width: 100%;
    height: 24px;
}

.preview {
    display: flex;
    align-items: center;
    justify-content: center;
}

.preview text {
    font-size: 9px;
}

.axis-z {
    fill: #6a2c9c;
}

.preview .axis-x,
.preview .axis-y {
    font-family: "Liberation Serif", serif;
}

.axis-y {
    fill: #2ecc2e;
}

.axis-x {
    fill: #e000d0;
}

/* download bar */
.downloads {
    position: relative;
    z-index: 3;
    display: flex;
    align-items: center;
    flex-shrink: 0;
    height: 49px;
    padding: 0 13px 0 20px;
    border-top: 1px solid #b0b0b0;
    background: #fff;
}

.file {
    display: flex;
    align-items: center;
    gap: 13px;
    flex-shrink: 0;
    width: 180px;
    font-size: 13px;
}

.more {
    width: 31px;
    height: 36px;
    padding-right: 18px;
    border-right: 1px solid #ccc;
}

.show-all {
    height: 32px;
    margin-left: auto;
    padding: 0 15px;
    font-size: 12px;
    border: 1px solid #dadce0;
    border-radius: 4px;
}

.close-bar {
    margin-left: 13px;
}
```
